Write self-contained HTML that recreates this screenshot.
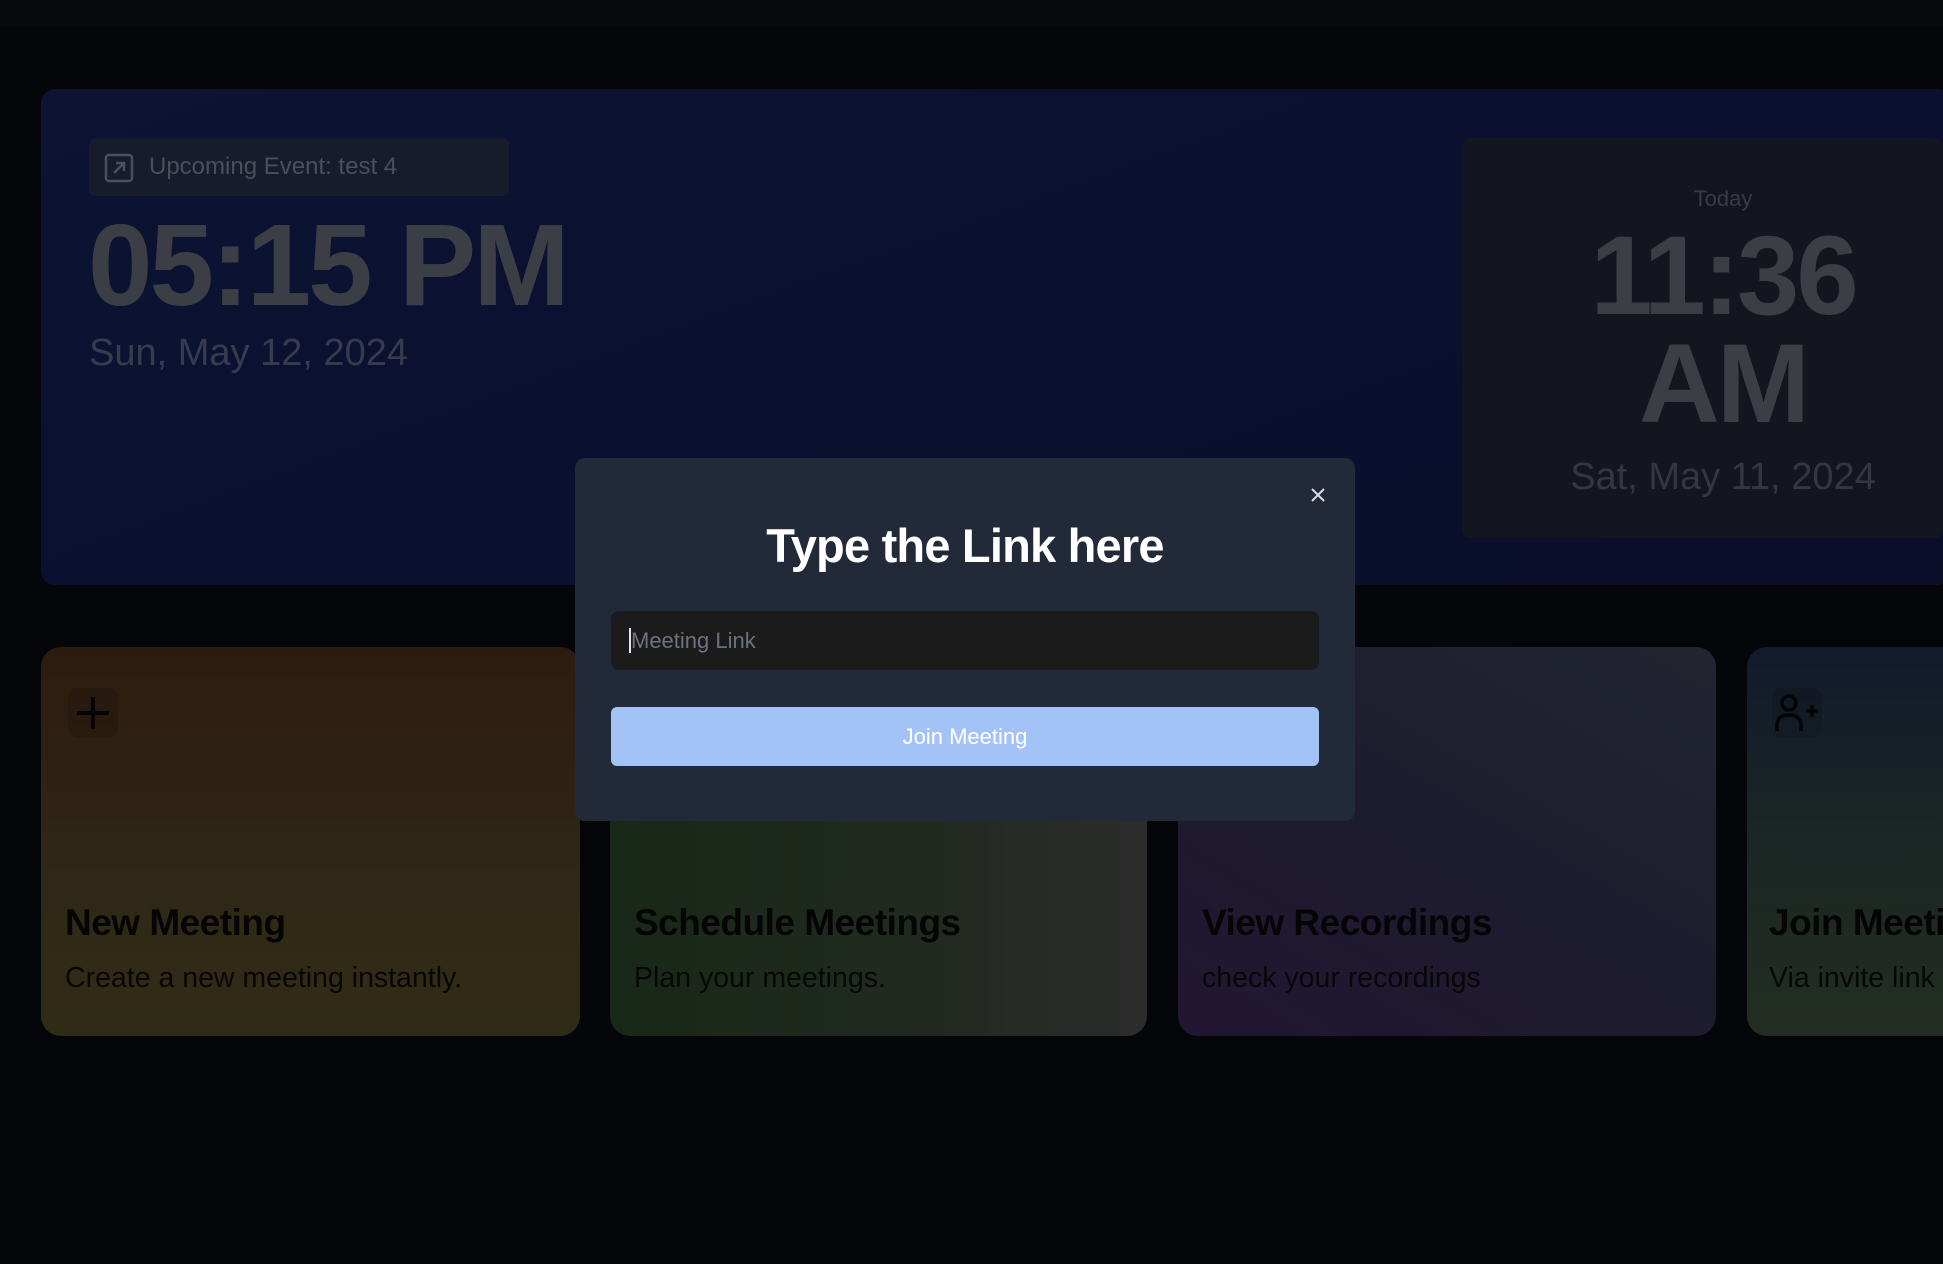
<!DOCTYPE html>
<html><head><meta charset="utf-8"><style>
*{margin:0;padding:0;box-sizing:border-box}
body{width:1943px;height:1264px;overflow:hidden;background:#050609;font-family:"Liberation Sans",sans-serif;position:relative}
.abs{position:absolute}
.top{left:0;top:0;width:1943px;height:27px;background:#08090c}
.hero{left:41px;top:89px;width:1910px;height:496px;border-radius:14px;background:linear-gradient(160deg,#0d1333 0%,#0b1030 50%,#0a0e29 100%)}
.pill{left:89px;top:138px;width:420px;height:58px;border-radius:6px;background:#171b2c;color:#4b4f5c;font-size:24px;line-height:58px;padding-left:60px}
.big{color:#3c3e45;font-weight:bold;letter-spacing:-1px}
.rp{left:1462px;top:138px;width:481px;height:400px;background:#13151f;border-radius:8px}
.card{top:647px;height:389px;border-radius:20px}
.ib{width:50px;height:50px;border-radius:10px;left:27px;top:41px;position:absolute;background:rgba(0,0,0,0.12)}
.ct{position:absolute;left:24px;top:255px;font-size:37px;font-weight:bold;color:#050505;letter-spacing:-0.5px}
.cd{position:absolute;left:24px;top:315px;font-size:28.5px;color:#070707}
.modal{left:575px;top:458px;width:780px;height:363px;background:#222939;border-radius:10px}
.rc{left:1462px;width:522px;text-align:center}
</style></head><body>
<div class="abs top"></div>
<div class="abs hero"></div>
<div class="abs pill">Upcoming Event: test 4</div>
<svg class="abs" style="left:104px;top:153px" width="30" height="30" viewBox="0 0 30 30"><rect x="2" y="2" width="26" height="26" rx="3" fill="none" stroke="#4b4f5c" stroke-width="2.5"/><path d="M10 20 L20 10 M12 10 H20 V18" fill="none" stroke="#4b4f5c" stroke-width="2.5"/></svg>
<div class="abs big" style="left:88px;top:200px;font-size:116px;line-height:130px;letter-spacing:-3px">05:15 PM</div>
<div class="abs" style="left:89px;top:332px;font-size:38px;color:#373b4c">Sun, May 12, 2024</div>
<div class="abs rp"></div>
<div class="abs rc" style="top:186px;font-size:22px;color:#3a3c45">Today</div>
<div class="abs big rc" style="top:222px;font-size:112px;line-height:108px;letter-spacing:-3px">11:36<br>AM</div>
<div class="abs rc" style="top:456px;font-size:38px;color:#35373f">Sat, May 11, 2024</div>

<div class="abs card" style="left:41px;width:539px;background:linear-gradient(180deg,#2e1b0f,#2f2816 60%,#302b16)">
<div class="ib"></div>
<svg class="abs" style="left:30px;top:44px" width="44" height="44" viewBox="0 0 44 44"><path d="M22 6V38M6 22H38" stroke="#050505" stroke-width="4"/></svg>
<div class="ct">New Meeting</div><div class="cd">Create a new meeting instantly.</div></div>
<div class="abs card" style="left:610px;width:537px;background:linear-gradient(90deg,#182818,#222a20 60%,#2c2c2c)">
<div class="ct">Schedule Meetings</div><div class="cd">Plan your meetings.</div></div>
<div class="abs card" style="left:1178px;width:538px;background:linear-gradient(30deg,#221632,#1d1c2f 50%,#222630)">
<div class="ct">View Recordings</div><div class="cd">check your recordings</div></div>
<div class="abs card" style="left:1747px;width:250px;background:linear-gradient(180deg,#121a2c,#1c2624 50%,#222d22)">
<div class="ib" style="left:25px"></div>
<svg class="abs" style="left:26px;top:42px" width="50" height="50" viewBox="0 0 50 50"><circle cx="16" cy="14" r="7" fill="none" stroke="#050505" stroke-width="3.5"/><path d="M4 42V36C4 29 9 26 16 26C23 26 28 29 28 36V42" fill="none" stroke="#050505" stroke-width="3.5"/><path d="M33 22H45M39 16V28" stroke="#050505" stroke-width="3.5"/></svg>
<div class="ct" style="left:22px">Join Meeting</div><div class="cd" style="left:22px">Via invite link</div></div>

<div class="abs modal">
<svg class="abs" style="left:734px;top:28px" width="18" height="18" viewBox="0 0 18 18"><path d="M3 3L15 15M15 3L3 15" stroke="#d8dbe2" stroke-width="2"/></svg>
<div class="abs" style="left:0;width:780px;top:60px;text-align:center;font-size:47px;font-weight:bold;color:#fff;letter-spacing:-0.8px">Type the Link here</div>
<div class="abs" style="left:36px;top:153px;width:708px;height:59px;background:#1b1b1c;border-radius:8px;font-size:22px;color:#6b7280;line-height:59px;padding-left:18px"><span style="border-left:2px solid #e5e7eb">Meeting Link</span></div>
<div class="abs" style="left:36px;top:249px;width:708px;height:59px;background:#a3c3f7;border-radius:6px;font-size:22px;color:#fff;text-align:center;line-height:59px">Join Meeting</div>
</div>
</body></html>
